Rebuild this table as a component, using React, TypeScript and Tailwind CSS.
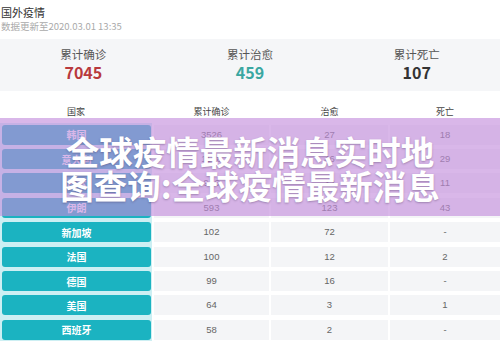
import React from 'react';

type Row = { name: string; confirmed: string; cured: string; dead: string };

const rows: Row[] = [
  { name: '韩国', confirmed: '3526', cured: '27', dead: '18' },
  { name: '意大利', confirmed: '1128', cured: '46', dead: '29' },
  { name: '日本', confirmed: '946', cured: '32', dead: '11' },
  { name: '伊朗', confirmed: '593', cured: '123', dead: '43' },
  { name: '新加坡', confirmed: '102', cured: '72', dead: '-' },
  { name: '法国', confirmed: '100', cured: '12', dead: '2' },
  { name: '德国', confirmed: '99', cured: '16', dead: '-' },
  { name: '美国', confirmed: '64', cured: '3', dead: '1' },
  { name: '西班牙', confirmed: '58', cured: '2', dead: '-' },
];

const stats = [
  { label: '累计确诊', value: '7045', color: 'text-[#b8393d]' },
  { label: '累计治愈', value: '459', color: 'text-[#3aa7a1]' },
  { label: '累计死亡', value: '107', color: 'text-[#333333]' },
];

const cols = 'grid grid-cols-[152px_115px_117px_1fr] gap-x-[2px]';

const App = () => {
  return (
    <div
      className="relative w-[500px] h-[341px] overflow-hidden bg-white"
      style={{ fontFamily: '"Noto Sans CJK SC", "Liberation Sans", sans-serif' }}>
      {/* header */}
      <div className="pt-[4px] pl-[1px]">
        <div className="text-[11px] leading-[16px] text-[#333]">国外疫情</div>
        <div className="text-[9.5px] leading-[12px] text-[#aaa]">数据更新至2020.03.01 13:35</div>
      </div>

      {/* summary */}
      <div className="mt-[7px] h-[52px] bg-[#f5f6f8] grid grid-cols-3">
        {stats.map((s) => (
          <div key={s.label} className="flex flex-col items-center pt-[7px]">
            <span className="text-[11.5px] leading-[16px] text-[#555]">{s.label}</span>
            <span className={`text-[16px] leading-[20px] font-bold ${s.color}`}>{s.value}</span>
          </div>
        ))}
      </div>

      {/* table */}
      <div className={`${cols} mt-[11px] h-[20px] items-center text-[9px] text-[#444]`}>
        <span className="text-center">国家</span>
        <span className="text-center">累计确诊</span>
        <span className="text-center">治愈</span>
        <span className="text-center">死亡</span>
      </div>
      <div className="pt-[0.5px]">
        {rows.map((r) => (
          <div key={r.name} className={`${cols} h-[24.4px] items-center text-[9.5px] text-[#666]`} style={{ fontFamily: '"Liberation Sans", "Noto Sans CJK SC", sans-serif' }}>
            <div className="h-full bg-[#cdeff3] flex items-center pl-[2px] pr-[1px]">
              <div
                className="w-full h-[20px] rounded-[3px] bg-[#1bb3c1] flex items-center justify-center text-white font-bold text-[10px]"
                style={{ fontFamily: '"Noto Sans CJK SC", sans-serif' }}>
                {r.name}
              </div>
            </div>
            <div className="h-[20px] bg-[#f4f5f7] flex items-center justify-center">{r.confirmed}</div>
            <div className="h-[20px] bg-[#f4f5f7] flex items-center justify-center">{r.cured}</div>
            <div className="h-[20px] bg-[#f4f5f7] flex items-center justify-center">{r.dead}</div>
          </div>
        ))}
      </div>

      {/* overlay banner */}
      <div className="absolute left-0 right-0 top-[118px] h-[98px] bg-[rgba(193,138,219,0.62)] flex flex-col items-center pt-[16px]">
        <div
          className="text-[33.5px] leading-[34px] font-bold text-white whitespace-nowrap"
          style={{ textShadow: '0 1px 2px rgba(60,40,80,0.35)' }}>
          全球疫情最新消息实时地
        </div>
        <div
          className="text-[33.5px] leading-[34px] font-bold text-white whitespace-nowrap"
          style={{ textShadow: '0 1px 2px rgba(60,40,80,0.35)' }}>
          图查询:全球疫情最新消息
        </div>
      </div>
    </div>
  );
};

export default App;
